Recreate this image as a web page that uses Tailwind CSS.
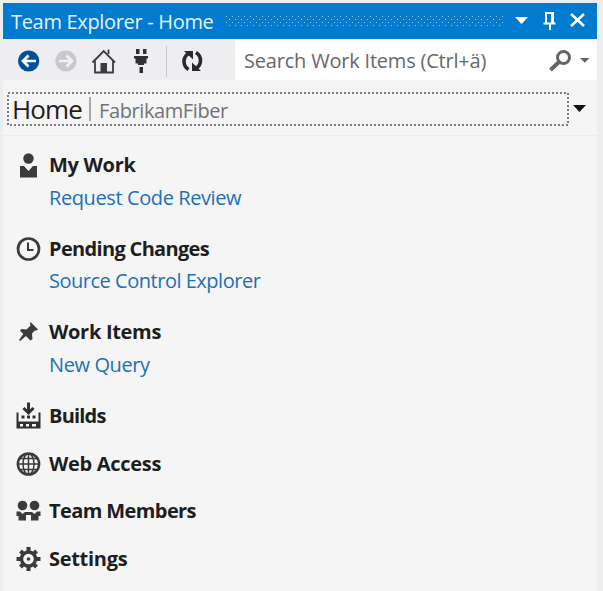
<!DOCTYPE html>
<html lang="en">
<head>
<meta charset="utf-8">
<title>Team Explorer - Home</title>
<script src="https://cdn.jsdelivr.net/npm/@tailwindcss/browser@4"></script>
</head>
<body class="h-[591px] w-[603px] overflow-hidden bg-[#eeeef0] pt-[3px] pr-[6px] pl-[3px] font-['Open_Sans','Noto_Sans',sans-serif] text-[20px] whitespace-nowrap">
<main class="h-[588px] bg-[#f5f5f5]">
  <header class="flex h-[36px] items-center bg-[#007bd0] pl-[8px] text-[#e4f3ff]">
    <h1 class="w-[214px] pt-px leading-[36px] tracking-[-0.32px]">Team Explorer - Home</h1>
    <svg class="h-[11px] w-[278px]" shape-rendering="crispEdges">
      <defs><pattern id="grip" width="6" height="6" patternUnits="userSpaceOnUse"><path d="M1 0h1v1h-1zM4 3h1v1h-1z" fill="#8acdf8"/></pattern></defs>
      <rect width="278" height="10" fill="url(#grip)"/>
    </svg>
    <svg class="h-[36px] w-[94px]" viewBox="503 3 94 36" fill="none">
      <path d="M515 17h13l-6.500 7z" fill="#fff"/>
      <path d="M546 23V13h7v10M543.500 23.500h12M550 24v6" stroke="#fff" stroke-width="2"/><path d="M552.500 12v11" stroke="#fff" stroke-width="3"/>
      <path d="M571 14l13 12M584 14l-13 12" stroke="#fff" stroke-width="2.600"/>
    </svg>
  </header>
  <nav class="flex h-[41px] border-t border-[#f6f6f8] bg-[#eeeef1]">
    <svg class="h-[40px] w-[232px]" viewBox="3 40 232 40" fill="none">
      <circle cx="28.700" cy="61" r="10.600" fill="#02509c"/>
      <path d="M36 61H23M28.500 55.500L23 61l5.500 5.500" stroke="#fff" stroke-width="2.700"/>
      <circle cx="66" cy="61" r="10.600" fill="#c9c9cb"/>
      <path d="M59 61h13M66.500 55.500L72 61l-5.500 5.500" stroke="#f2f2f4" stroke-width="2.700"/>
      <path d="M92.500 62.500L103.700 51l11.300 11.500M95 61v11.500h18V61M108.500 54v-4.500" stroke="#3c3c3f" stroke-width="1.800"/>
      <path d="M100.500 63h6.500v10h-6.500z" fill="#3c3c3f"/>
      <path d="M136 49h3.500v5H136zM143 49h3.500v5H143zM134 56h14v2.500h-1.500v5H144v1.500h-6v-1.500h-2.500v-5H134zM139.500 67h3.500v6h-3.500z" fill="#303033"/>
      <path d="M166.500 46v31" stroke="#c6c6cb"/>
      <path d="M188.500 69.500c-6-4-6-12 0-16M196 52.500c6 4 6 12 0 16" stroke="#29292c" stroke-width="3.600"/>
      <path d="M184 51h9v8.500zM201 71h-9v-8.500z" fill="#29292c"/>
    </svg>
    <div class="flex flex-1 items-center bg-white pl-[9px] text-[#67676a]">
      <span class="w-[303px] pt-[2px] tracking-[-0.2px]">Search Work Items (Ctrl+ä)</span>
      <svg class="h-[40px] w-[50px]" viewBox="547 40 50 40" fill="none">
        <circle cx="563.500" cy="57.500" r="6" stroke="#656568" stroke-width="3"/><path d="M559 62l-8.500 8" stroke="#656568" stroke-width="4"/>
        <path d="M580 58h9.500l-4.700 4.800z" fill="#656568"/>
      </svg>
    </div>
  </nav>
  <section class="flex h-[56px] border-b border-[#ededef] pt-[12px] pl-[4px]">
    <div class="relative flex h-[34px] w-[562px] items-center pl-[5px]">
      <svg class="absolute inset-0 h-[34px] w-[562px]" fill="none"><rect x="1" y="1" width="560" height="32" stroke="#555558" stroke-width="1.500" stroke-dasharray="2 2"/></svg>
      <h2 class="w-[77px] pt-px text-[26px] tracking-[-0.9px] text-[#1e1e1e]">Home</h2>
      <span class="h-[24px] w-[2px] bg-[#a9a9ab]"></span>
      <span class="pt-[4px] pl-[8px] tracking-[-0.4px] text-[#737376]">FabrikamFiber</span>
    </div>
    <svg class="mt-[12px] ml-[4px] h-[8px] w-[14px]"><path d="M0 1h13l-6.500 7z" fill="#111"/></svg>
  </section>
  <ul class="pt-[13px] pl-[12px] font-bold text-[#1e1e1e]">
    <li class="grid h-[83.500px] grid-cols-[34px_1fr] grid-rows-[32px_32px] items-center">
      <svg class="h-[32px] w-[28px]" viewBox="0 0 28 32"><circle cx="13.500" cy="9.500" r="5.200" fill="#3b3b3e"/><path d="M5 17h4l4.500 5 4.500-5h4v11.500H5z" fill="#3b3b3e"/></svg>
      <span class="tracking-[-0.3px]">My Work</span><a class="col-start-2 pt-px font-normal tracking-[-0.4px] text-[#1c70b8]">Request Code Review</a>
    </li>
    <li class="grid h-[83.500px] grid-cols-[34px_1fr] grid-rows-[32px_32px] items-center">
      <svg class="h-[32px] w-[28px]" viewBox="0 0 28 32" fill="none" stroke="#3b3b3e"><circle cx="13.500" cy="16" r="10.500" stroke-width="2.700"/><path d="M13 9.500V17h5.500" stroke-width="2"/></svg>
      <span class="tracking-[-0.67px]">Pending Changes</span><a class="col-start-2 font-normal tracking-[-0.48px] text-[#1c70b8]">Source Control Explorer</a>
    </li>
    <li class="grid h-[83.500px] grid-cols-[34px_1fr] grid-rows-[32px_32px] items-center">
      <svg class="h-[32px] w-[28px]" viewBox="0 0 28 32"><path d="M15.500 6L23 13.500l-2 1.200-1-.5-3 3.300.5 5.500-2 1.500-4.500-4.500L5 25l-1-1 4.300-6L5 14.500l1.500-1.500 5 .5 4-4-.5-2z" fill="#3b3b3e"/></svg>
      <span class="tracking-[-0.3px]">Work Items</span><a class="col-start-2 pt-px font-normal tracking-[-0.4px] text-[#1c70b8]">New Query</a>
    </li>
    <li class="grid h-[48px] grid-cols-[34px_1fr] grid-rows-[32px] items-center">
      <svg class="h-[32px] w-[28px]" viewBox="0 0 28 32" fill="none"><path d="M13.500 2.500v11M8.500 8l5 5 5-5" stroke="#303033" stroke-width="3"/><path d="M1.500 12.500v16h24v-16h-2v9h-20v-9zM6.500 15.500h3v3h-3zM12 15.500h3v3h-3zM17.500 15.500h3v3h-3z" fill="#303033"/><path d="M5 24h3v2.500H5zM11 24h3v2.500h-3zM17 24h4v2.500h-4z" fill="#f5f5f5"/></svg>
      <span class="tracking-[-0.8px]">Builds</span>
    </li>
    <li class="grid h-[47.500px] grid-cols-[34px_1fr] grid-rows-[32px] items-center">
      <svg class="h-[32px] w-[28px]" viewBox="0 0 28 32" fill="none" stroke="#3b3b3e"><circle cx="13.500" cy="16" r="10.600" stroke-width="2.500"/><ellipse cx="13.500" cy="16" rx="5.500" ry="10.500" stroke-width="1.500"/><path d="M13.500 6v20M3 16h21M5 10.500h17M5 21.500h17" stroke-width="1.500"/></svg>
      <span class="tracking-[-0.3px]">Web Access</span>
    </li>
    <li class="grid h-[48px] grid-cols-[34px_1fr] grid-rows-[32px] items-center">
      <svg class="h-[32px] w-[28px]" viewBox="0 0 28 32" fill="#3b3b3e"><circle cx="7.500" cy="10.500" r="4.800"/><circle cx="19.500" cy="10.500" r="4.800"/><path d="M1.500 16.500H5l2.500 2.500 2.500-2h7l2.500 2 2.500-2.500h3.500V21H23.500v4.500H16V20h-5v5.500H3.500V21h-2z"/></svg>
      <span class="tracking-[-0.6px]">Team Members</span>
    </li>
    <li class="grid h-[47px] grid-cols-[34px_1fr] grid-rows-[32px] items-center">
      <svg class="h-[32px] w-[28px]" viewBox="0 0 28 32" fill="none" stroke="#3b3b3e"><circle cx="13.500" cy="16" r="7" stroke-width="3.400"/><circle cx="13.500" cy="16" r="1.800" fill="#3b3b3e" stroke="none"/><path d="M13.500 4v4M13.500 24v4M1.500 16h4M21.500 16h4M5.500 8l2.500 2.500M19 21.500l2.500 2.500M5.500 24L8 21.500M19 10.500L21.500 8" stroke-width="4"/></svg>
      <span class="tracking-[-0.3px]">Settings</span>
    </li>
  </ul>
</main>
</body>
</html>
